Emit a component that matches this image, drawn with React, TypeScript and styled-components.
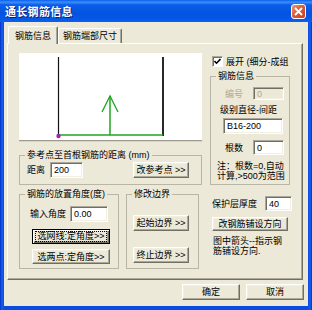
import styled, { createGlobalStyle } from "styled-components";

const GlobalStyle = createGlobalStyle`
    html, body { margin: 0; padding: 0; }
    body {
        font-family: "Liberation Sans", "Noto Sans CJK SC", sans-serif;
        font-size: 9px;
        line-height: 10px;
        color: #000;
    }
    * { box-sizing: border-box; }
`;

const Window = styled.div`
    width: 312px;
    height: 310px;
    display: flex;
    flex-direction: column;
    background: linear-gradient(to right, #0530C8 0px, #1662EE 2px, #0A4BE0 4px, #0A4BE0 308px, #1662EE 310px, #0530C8 312px);
`;

const TitleBar = styled.div`
    height: 22px;
    flex-shrink: 0;
    display: flex;
    align-items: center;
    justify-content: space-between;
    padding: 0 6px 0 5px;
    background: linear-gradient(to bottom, #0A5FEF 0%, #3D8EF9 10%, #0B5DEC 22%, #0453E0 60%, #0557E6 85%, #0A62F0 100%);
`;

const Title = styled.div`
    font-family: "Noto Sans CJK SC", sans-serif;
    font-size: 11px;
    font-weight: 700;
    color: #fff;
    text-shadow: 1px 1px 0 #0A1E7A;
    letter-spacing: 0.3px;
`;

const CloseBtn = styled.div`
    width: 15px;
    height: 15px;
    border: 1px solid #fff;
    border-radius: 3px;
    background: linear-gradient(135deg, #EE9A7C 0%, #DE5B36 45%, #C8401C 100%);
    display: flex;
    align-items: center;
    justify-content: center;
`;

const Body = styled.div`
    flex: 1;
    margin: 0 4px 4px;
    background: #ECE9D8;
    padding: 4px 4px 6px 3px;
    display: flex;
    flex-direction: column;
`;

const TabRow = styled.div`
    height: 17px;
    display: flex;
    align-items: flex-end;
    padding-left: 1px;
`;

const Tab = styled.div<{ $active?: boolean }>`
    position: relative;
    z-index: ${(p) => (p.$active ? 2 : 1)};
    height: ${(p) => (p.$active ? 18 : 15)}px;
    margin-bottom: ${(p) => (p.$active ? -1 : 0)}px;
    padding: 0 ${(p) => (p.$active ? 6 : 4)}px;
    display: flex;
    align-items: center;
    background: #ECE9D8;
    border-top: 1px solid #fff;
    border-left: 1px solid #fff;
    border-right: 1px solid #716F64;
    box-shadow: inset -1px 0 0 #ACA899;
    border-radius: 2px 2px 0 0;
    font-family: "Noto Sans CJK SC", sans-serif;
`;

const Panel = styled.div`
    height: 237px;
    margin-right: 1px;
    display: flex;
    padding: 9px 0 0 11px;
    border: 1px solid;
    border-color: #fff #716F64 #716F64 #fff;
    box-shadow: inset -1px -1px 0 #ACA899;
`;

const LeftCol = styled.div`
    width: 183px;
    display: flex;
    flex-direction: column;
`;

const Canvas = styled.div`
    height: 88px;
    background: #fff;
    border-bottom: 1px solid #9C9A8E;
    box-shadow: 0 1px 0 #D8D5C6;
`;

const Group = styled.fieldset<{ $w?: number; $h: number; $mt?: number }>`
    margin: ${(p) => p.$mt ?? 0}px 0 0 0;
    padding: 1px 0 0 0;
    min-width: 0;
    width: ${(p) => (p.$w ? `${p.$w}px` : "auto")};
    height: ${(p) => p.$h}px;
    border: 1px solid #B9B6A6;
    display: flex;
    flex-direction: column;
    align-items: flex-start;
`;

const Legend = styled.legend`
    margin-left: 5px;
    padding: 0 2px;
    height: 10px;
    line-height: 10px;
`;

const Row = styled.div<{ $mt?: number; $pl?: number; $gap?: number; $h?: number }>`
    display: flex;
    align-items: center;
    align-self: stretch;
    height: ${(p) => p.$h ?? 16}px;
    margin-top: ${(p) => p.$mt ?? 0}px;
    padding-left: ${(p) => p.$pl ?? 0}px;
    gap: ${(p) => p.$gap ?? 0}px;
`;

const Label = styled.span<{ $disabled?: boolean }>`
    white-space: nowrap;
    color: ${(p) => (p.$disabled ? "#ACA899" : "#000")};
`;

const Field = styled.div<{ $w: number; $h?: number; $ml?: number; $mt?: number; $disabled?: boolean }>`
    width: ${(p) => p.$w}px;
    height: ${(p) => p.$h ?? 16}px;
    margin-left: ${(p) => p.$ml ?? 0}px;
    margin-top: ${(p) => p.$mt ?? 0}px;
    flex-shrink: 0;
    display: flex;
    align-items: center;
    padding-left: 3px;
    background: ${(p) => (p.$disabled ? "#ECE9D8" : "#fff")};
    color: ${(p) => (p.$disabled ? "#ACA899" : "#000")};
    border: 1px solid;
    border-color: #ACA899 #fff #fff #ACA899;
    box-shadow: inset 1px 1px 0 #716F64, inset -1px -1px 0 #F1EFE2;
`;

const Btn = styled.div<{ $w: number; $h?: number; $ml?: number; $mt?: number; $focus?: boolean }>`
    width: ${(p) => p.$w}px;
    height: ${(p) => p.$h ?? 16}px;
    margin-left: ${(p) => p.$ml ?? 0}px;
    margin-top: ${(p) => p.$mt ?? 0}px;
    flex-shrink: 0;
    display: flex;
    align-items: center;
    justify-content: center;
    white-space: nowrap;
    background: #ECE9D8;
    border: 1px solid;
    border-color: ${(p) => (p.$focus ? "#000" : "#fff #716F64 #716F64 #fff")};
    box-shadow: ${(p) =>
        p.$focus
            ? "inset 1px 1px 0 #fff, inset -1px -1px 0 #716F64, inset -2px -2px 0 #ACA899"
            : "inset -1px -1px 0 #ACA899, inset 1px 1px 0 #F1EFE2"};
`;

const FocusText = styled.span`
    outline: 1px dotted #000;
    outline-offset: 0px;
    padding: 0 1px;
    line-height: 9px;
`;

const RightCol = styled.div`
    width: 92px;
    margin-left: 8px;
    display: flex;
    flex-direction: column;
    align-items: flex-start;
`;

const CheckBox = styled.div`
    width: 11px;
    height: 11px;
    background: #fff;
    border: 1px solid;
    border-color: #ACA899 #fff #fff #ACA899;
    box-shadow: inset 1px 1px 0 #716F64;
    display: flex;
    align-items: center;
    justify-content: center;
`;

const Note = styled.div<{ $mt: number; $pl: number }>`
    margin-top: ${(p) => p.$mt}px;
    padding-left: ${(p) => p.$pl}px;
    white-space: nowrap;
`;

const Footer = styled.div`
    margin-top: 4px;
    display: flex;
    justify-content: flex-end;
    gap: 6px;
`;

function App() {
    return (
        <Window>
            <GlobalStyle />
            <TitleBar>
                <Title>通长钢筋信息</Title>
                <CloseBtn>
                    <svg width="9" height="9" viewBox="0 0 9 9">
                        <path d="M1 1 L8 8 M8 1 L1 8" stroke="#fff" strokeWidth="1.8" />
                    </svg>
                </CloseBtn>
            </TitleBar>
            <Body>
                <TabRow>
                    <Tab $active>钢筋信息</Tab>
                    <Tab>钢筋端部尺寸</Tab>
                </TabRow>
                <Panel>
                    <LeftCol>
                        <Canvas>
                            <svg width="183" height="87" viewBox="0 0 183 87">
                                <line x1="39.5" y1="4" x2="39.5" y2="83" stroke="#111" strokeWidth="1.2" />
                                <line x1="144" y1="4" x2="144" y2="83" stroke="#111" strokeWidth="1.8" />
                                <line x1="39" y1="82" x2="144" y2="82" stroke="#1FA41F" strokeWidth="1.5" />
                                <line x1="91" y1="82" x2="91" y2="43" stroke="#1FA41F" strokeWidth="1.5" />
                                <polyline points="83,59 91,43 99,59" fill="none" stroke="#1FA41F" strokeWidth="1.3" />
                                <circle cx="39.5" cy="83" r="2.2" fill="#A424B0" />
                            </svg>
                        </Canvas>
                        <Group $h={35} $mt={9}>
                            <Legend>参考点至首根钢筋的距离 (mm)</Legend>
                            <Row $h={17} $pl={7}>
                                <Label>距离</Label>
                                <Field $w={33} $ml={5}>200</Field>
                                <Btn $w={56} $ml={50}>改参考点 &gt;&gt;</Btn>
                            </Row>
                        </Group>
                        <Row $h={80} $mt={4} $gap={7}>
                            <Group $w={100} $h={80}>
                                <Legend>钢筋的放置角度(度)</Legend>
                                <Row $mt={6} $pl={10}>
                                    <Label>输入角度</Label>
                                    <Field $w={38} $ml={4}>0.00</Field>
                                </Row>
                                <Btn $w={78} $h={15} $ml={12} $mt={7} $focus>
                                    <FocusText>选网线:定角度&gt;&gt;</FocusText>
                                </Btn>
                                <Btn $w={78} $h={15} $ml={12} $mt={5}>选两点:定角度&gt;&gt;</Btn>
                            </Group>
                            <Group $w={73} $h={80}>
                                <Legend>修改边界</Legend>
                                <Btn $w={56} $ml={6} $mt={15}>起始边界 &gt;&gt;</Btn>
                                <Btn $w={56} $ml={6} $mt={16}>终止边界 &gt;&gt;</Btn>
                            </Group>
                        </Row>
                    </LeftCol>
                    <RightCol>
                        <Row $h={11} $mt={3} $pl={2} $gap={3}>
                            <CheckBox>
                                <svg width="7" height="7" viewBox="0 0 7 7">
                                    <path d="M0.5 3 L2.5 5.2 L6.5 1" fill="none" stroke="#000" strokeWidth="1.6" />
                                </svg>
                            </CheckBox>
                            <Label>展开 (细分-成组</Label>
                        </Row>
                        <Group $w={80} $h={114} $mt={4}>
                            <Legend>钢筋信息</Legend>
                            <Row $h={13} $mt={5} $pl={14}>
                                <Label $disabled>编号</Label>
                                <Field $w={31} $h={13} $ml={10} $disabled>0</Field>
                            </Row>
                            <Note $mt={5} $pl={9}>级别直径-间距</Note>
                            <Field $w={60} $ml={12} $mt={3}>B16-200</Field>
                            <Row $h={15} $mt={6} $pl={14}>
                                <Label>根数</Label>
                                <Field $w={31} $h={15} $ml={10}>0</Field>
                            </Row>
                            <Note $mt={6} $pl={6}>
                                注：根数=0,自动<br />
                                计算,&gt;500为范围
                            </Note>
                        </Group>
                        <Row $h={15} $mt={11} $pl={2}>
                            <Label>保护层厚度</Label>
                            <Field $w={27} $h={15} $ml={8}>40</Field>
                        </Row>
                        <Btn $w={76} $h={14} $ml={2} $mt={6}>改钢筋铺设方向</Btn>
                        <Note $mt={5} $pl={3}>
                            图中箭头--指示钢<br />
                            筋铺设方向.
                        </Note>
                    </RightCol>
                </Panel>
                <Footer>
                    <Btn $w={58}>确定</Btn>
                    <Btn $w={58}>取消</Btn>
                </Footer>
            </Body>
        </Window>
    );
}

export default App;
